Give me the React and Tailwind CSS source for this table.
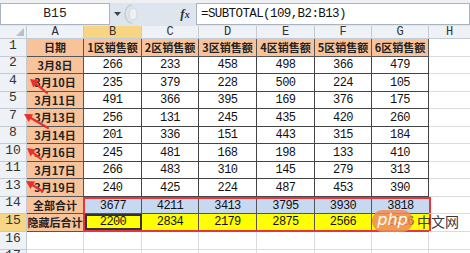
import React from "react";

const mono = { fontFamily: '"Liberation Mono", "DejaVu Sans Mono", monospace' };
const cjk = { fontFamily: '"Noto Sans CJK SC", "Noto Sans", sans-serif' };

const rows = [
  { n: "2", d: "3月8日", v: [266, 233, 458, 498, 366, 479] },
  { n: "4", d: "3月10日", v: [235, 379, 228, 500, 224, 105] },
  { n: "5", d: "3月11日", v: [491, 366, 395, 169, 376, 175] },
  { n: "7", d: "3月13日", v: [256, 131, 245, 435, 420, 260] },
  { n: "8", d: "3月14日", v: [201, 336, 151, 443, 315, 184] },
  { n: "10", d: "3月16日", v: [245, 481, 168, 198, 133, 410] },
  { n: "11", d: "3月17日", v: [266, 483, 310, 145, 279, 313] },
  { n: "13", d: "3月19日", v: [240, 425, 224, 487, 453, 390] },
];

const widths = ["w-[57px]", "w-[58px]", "w-[57px]", "w-[58px]", "w-[58px]", "w-[57px]", "w-[57px]"];
const heights = ["h-[18px]", "h-[17px]"];

function RowHead({ label, active, h }) {
  return (
    <div
      className={`${h} w-[27px] shrink-0 flex items-end justify-center pb-[1px] border-r border-b border-[#c5cbd3] text-[13px] text-[#333] ${
        active ? "bg-[#f6d584]" : "bg-[#eef1f5]"
      }`}
      style={mono}
    >
      {label}
    </div>
  );
}

function Cell({ w, h, className = "", children, font = mono }) {
  return (
    <div
      className={`${w} ${h} shrink-0 flex items-center justify-center ${className}`}
      style={font}
    >
      {children}
    </div>
  );
}

function Arrow({ x1, y1, x2, y2 }) {
  const dx = x2 - x1;
  const dy = y2 - y1;
  const len = Math.hypot(dx, dy);
  const ux = dx / len;
  const uy = dy / len;
  const hl = 8;
  const hw = 4.5;
  const bx = x2 - ux * hl;
  const by = y2 - uy * hl;
  const p1 = `${bx - uy * hw},${by + ux * hw}`;
  const p2 = `${bx + uy * hw},${by - ux * hw}`;
  return (
    <g>
      <line x1={x1} y1={y1} x2={bx + ux} y2={by + uy} stroke="#e8302c" strokeWidth="2.2" strokeLinecap="round" />
      <polygon points={`${x2},${y2} ${p1} ${p2}`} fill="#e8302c" />
    </g>
  );
}

export default function App() {
  return (
    <div className="w-[470px] h-[253px] overflow-hidden bg-white relative select-none">
      {/* formula bar */}
      <div className="h-[26px] bg-[#dfe5ee] border-t-[3px] border-[#eef0f3] flex items-center pb-[1px]">
        <div className="h-[22px] w-[110px] bg-white border border-[#aab4c3] flex items-center justify-center text-[13px] text-[#222]" style={mono}>
          B15
        </div>
        <div className="w-[14px] flex items-center justify-center">
          <svg width="7" height="4" viewBox="0 0 7 4"><path d="M0 0h7L3.5 4z" fill="#444" /></svg>
        </div>
        <div className="w-[50px] flex items-center">
          <svg width="16" height="20" viewBox="0 0 16 20">
            <path d="M8 1 A7 9 0 0 0 8 19" fill="none" stroke="#c8ccd2" strokeWidth="1.5" />
            <ellipse cx="9" cy="10" rx="4" ry="6" fill="#eef0f3" stroke="#d2d6dc" />
          </svg>
        </div>
        <div className="w-[22px] flex items-center justify-center italic font-bold text-[13px] text-[#333]" style={{ fontFamily: '"Liberation Serif", serif' }}>
          f<span className="text-[10px]">x</span>
        </div>
        <div className="flex-1 h-[22px] bg-white border border-[#aab4c3] flex items-center pl-[4px] text-[12.5px] tracking-[-0.6px] text-[#111]" style={mono}>
          =SUBTOTAL(109,B2:B13)
        </div>
      </div>

      {/* column header */}
      <div className="flex h-[13px]">
        <div className="w-[27px] h-[13px] shrink-0 bg-[#eef1f5] border-r border-b border-[#c5cbd3] relative">
          <svg className="absolute right-[2px] bottom-[2px]" width="8" height="8" viewBox="0 0 8 8"><path d="M8 0V8H0z" fill="#b8bfc9" /></svg>
        </div>
        {["A", "B", "C", "D", "E", "F", "G"].map((c, i) => (
          <div
            key={c}
            className={`${widths[i]} h-[13px] shrink-0 flex items-center justify-center border-r border-b border-[#c5cbd3] text-[12px] text-[#333] ${
              c === "B" ? "bg-[#f6d584]" : "bg-[#eef1f5]"
            }`}
            style={mono}
          >
            {c}
          </div>
        ))}
        <div className="flex-1 h-[13px] flex items-center justify-center bg-[#eef1f5] border-b border-[#c5cbd3] text-[12px] text-[#333]" style={mono}>
          H
        </div>
      </div>

      {/* row 1 */}
      <div className="flex">
        <RowHead label="1" h="h-[18px]" />
        <Cell w={widths[0]} h="h-[18px]" className="bg-[#f8c39a] border-r border-b border-[#555] font-bold text-[11px] text-[#222]" font={cjk}>日期</Cell>
        {[1, 2, 3, 4, 5, 6].map((k) => (
          <Cell key={k} w={widths[k]} h="h-[18px]" className="bg-[#f8c39a] border-r border-b border-[#555] font-bold text-[11px] text-[#222]" font={cjk}>
            {k}区销售额
          </Cell>
        ))}
        <div className="flex-1 h-[18px] border-b border-[#dadcdf]" />
      </div>

      {rows.map((r, ri) => {
        const h = heights[(ri + 1) % 2];
        return (
          <div className="flex" key={r.n}>
            <RowHead label={r.n} h={h} />
            <Cell w={widths[0]} h={h} className="bg-[#f8c39a] border-r border-b border-[#555] font-bold text-[11px] text-[#222]" font={cjk}>
              {r.d}
            </Cell>
            {r.v.map((v, i) => (
              <Cell key={i} w={widths[i + 1]} h={h} className="bg-white border-r border-b border-[#444] text-[12px] tracking-[-0.6px] text-[#111]">
                {v}
              </Cell>
            ))}
            <div className={`flex-1 ${h} border-b border-[#dadcdf]`} />
          </div>
        );
      })}

      {/* row 14 & 15 */}
      <div className="flex">
        <RowHead label="14" h="h-[17px]" />
        <Cell w={widths[0]} h="h-[17px]" className="bg-[#f8c39a] border-r border-b border-[#555] font-bold text-[11px] text-[#222]" font={cjk}>全部合计</Cell>
        <div className="flex h-[17px] border-[2px] border-b-0 border-[#e8343a] -mr-[2px] -ml-[1px]">
          {[3677, 4211, 3413, 3795, 3930, 3818].map((v, i) => (
            <div
              key={i}
              className={`${i === 0 ? "w-[57px]" : widths[i + 1]} h-[15px] shrink-0 flex items-center justify-center bg-[#c6d9f0] border-r border-b border-[#555] last:border-r-0 text-[12px] tracking-[-0.6px] text-[#111]`}
              style={mono}
            >
              {v}
            </div>
          ))}
        </div>
        <div className="flex-1 h-[17px] border-b border-[#dadcdf]" />
      </div>
      <div className="flex">
        <RowHead label="15" h="h-[18px]" active />
        <Cell w={widths[0]} h="h-[18px]" className="bg-[#f8c39a] border-r border-b border-[#555] font-bold text-[11px] text-[#222]" font={cjk}>隐藏后合计</Cell>
        <div className="flex h-[18px] border-[2px] border-t-0 border-[#e8343a] -mr-[2px] -ml-[1px]">
          {[2200, 2834, 2179, 2875, 2566, 2316].map((v, i) => (
            <div
              key={i}
              className={`${i === 0 ? "w-[57px] outline outline-2 outline-[#333] -outline-offset-2" : widths[i + 1]} h-[16px] shrink-0 flex items-center justify-center bg-[#ffff00] border-r border-[#555] last:border-r-0 text-[12px] tracking-[-0.6px] text-[#111]`}
              style={mono}
            >
              {v}
            </div>
          ))}
        </div>
        <div className="flex-1 h-[18px] border-b border-[#dadcdf]" />
      </div>

      {/* rows 16, 17 */}
      {["16", "17"].map((n, ri) => {
        const h = heights[ri % 2];
        return (
          <div className="flex" key={n}>
            <RowHead label={n} h={h} />
            {widths.map((w, i) => (
              <div key={i} className={`${w} ${h} shrink-0 border-r border-b border-[#dadcdf]`} />
            ))}
            <div className={`flex-1 ${h} border-b border-[#dadcdf]`} />
          </div>
        );
      })}

      {/* annotation arrows */}
      <svg className="absolute left-0 top-0 pointer-events-none" width="470" height="253">
        <Arrow x1={47} y1={93} x2={30} y2={79} />
        <Arrow x1={48} y1={128} x2={24} y2={114} />
        <Arrow x1={41} y1={159} x2={27} y2={148} />
        <Arrow x1={42} y1={191} x2={26} y2={181} />
      </svg>

      {/* watermark */}
      <div className="absolute left-[372px] top-[210px] flex items-center pointer-events-none">
        <div className="w-[41px] h-[22px] rounded-full bg-[#f08a5a]/85 flex items-center justify-center text-white text-[16px] italic leading-none pb-[3px]" style={{ fontFamily: '"DejaVu Sans", sans-serif' }}>
          php
        </div>
        <div className="ml-[4px] text-[14px] text-[#3a3a3a] leading-none" style={cjk}>
          中文网
        </div>
      </div>
    </div>
  );
}
